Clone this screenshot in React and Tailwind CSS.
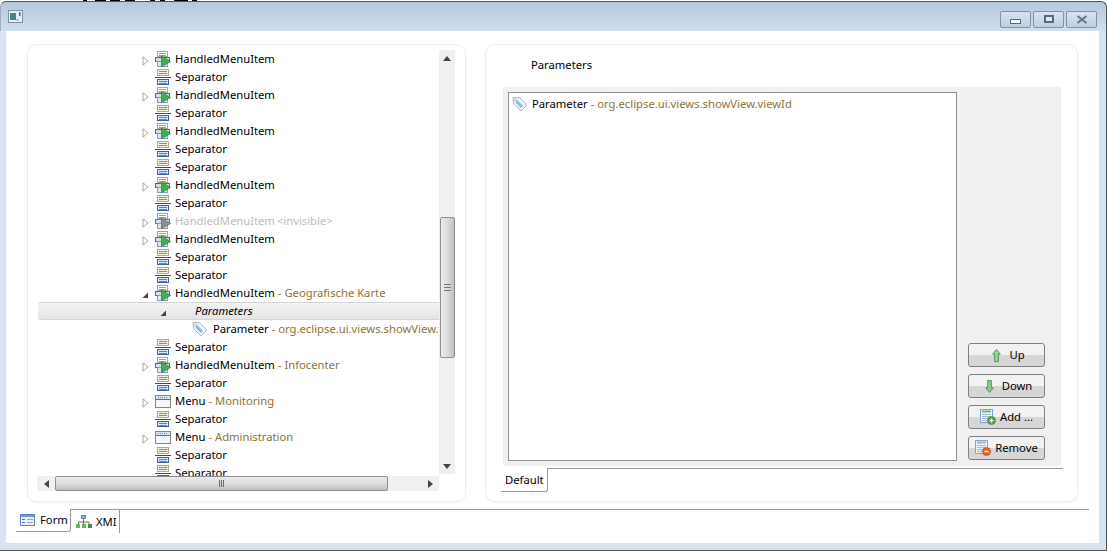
const rows = [
  { kind: "item", arrow: "closed" },
  { kind: "sep" },
  { kind: "item", arrow: "closed" },
  { kind: "sep" },
  { kind: "item", arrow: "closed" },
  { kind: "sep" },
  { kind: "sep" },
  { kind: "item", arrow: "closed" },
  { kind: "sep" },
  { kind: "item", arrow: "closed", invisible: true },
  { kind: "item", arrow: "closed" },
  { kind: "sep" },
  { kind: "sep" },
  { kind: "item", arrow: "open", label: "Geografische Karte" },
  { kind: "params" },
  { kind: "param" },
  { kind: "sep" },
  { kind: "item", arrow: "closed", label: "Infocenter" },
  { kind: "sep" },
  { kind: "menu", arrow: "closed", label: "Monitoring" },
  { kind: "sep" },
  { kind: "menu", arrow: "closed", label: "Administration" },
  { kind: "sep" },
  { kind: "sep" },
];

// bottoms of the letters that stick out above the window
const topMarks = [
  [83, 4], [95, 11], [110, 10], [125, 10], [150, 5], [160, 5], [174, 14], [192, 5],
];

function Twisty({ open }) {
  if (open) {
    return (
      <svg width="8" height="8" viewBox="0 0 8 8" className="block mt-[3px]">
        <path d="M7 1.5V7H1.5Z" fill="#444" />
      </svg>
    );
  }
  return (
    <svg width="7" height="10" viewBox="0 0 7 10" className="block ml-px mt-[4px]">
      <path d="M1 .8 6 5 1 9.2Z" fill="#fff" stroke="#a6a6a6" />
    </svg>
  );
}

function ItemIcon({ gray }) {
  const a = gray ? "#a5a5a5" : "#b5a878";
  const b = gray ? "#777" : "#2f6fbe";
  const c = gray ? "#9a9a9a" : "#7f9fd0";
  const g = gray ? "#8c8c8c" : "#3fb04f";
  return (
    <svg width="16" height="16" viewBox="0 0 16 16" className="block shrink-0">
      <rect x="2.5" y=".5" width="10" height="5" fill="#fff" stroke={a} />
      <path d="M4 2.5h7M4 4.5h7" stroke={c} />
      <rect x=".5" y="6.5" width="14" height="4" fill="#cfe0f5" stroke={b} />
      <rect x="2.5" y="10.5" width="10" height="5" fill="#dce6f5" stroke={c} />
      <path d="M6.5 5 15.5 10.5 6.5 15.8Z" fill={g} stroke={gray ? "#6a6a6a" : "#2a8a3a"} strokeWidth=".8" />
    </svg>
  );
}

function SepIcon() {
  return (
    <svg width="16" height="16" viewBox="0 0 16 16" className="block shrink-0">
      <rect x="2.5" y=".5" width="11" height="6" fill="#f5f3e8" stroke="#b5a878" />
      <path d="M4 2.5h8M4 4.5h8" stroke="#6f8fc4" />
      <path d="M0 8.5h16" stroke="#1f4f96" />
      <rect x="2.5" y="10.5" width="11" height="5" fill="#dbe6f6" stroke="#3a62a8" />
      <path d="M4 12.5h8M4 14.5h8" stroke="#5c80bd" />
    </svg>
  );
}

function MenuIcon() {
  return (
    <svg width="16" height="16" viewBox="0 0 16 16" className="block shrink-0">
      <rect x=".5" y="2.5" width="15" height="12" fill="#f4f8fc" stroke="#8a8a6a" />
      <rect x="1" y="3" width="14" height="3" fill="#d5e3f4" />
      <path d="M3 4.5h10" stroke="#6c8fc4" strokeDasharray="1 1" />
      <path d="M1 6.5h14" stroke="#3f74bf" />
    </svg>
  );
}

function TagIcon() {
  return (
    <svg width="16" height="16" viewBox="0 0 16 16" className="block shrink-0">
      <path d="M1 1.5H7.5L15 9 9 15 1.5 7.5Z" fill="#eef1f4" stroke="#b3b8bd" />
      <path d="M5 4 11 10 9 12 3.5 6.5Z" fill="#7cc0ef" />
      <circle cx="3.5" cy="3.8" r="1" fill="#fff" stroke="#9aa3aa" strokeWidth=".6" />
    </svg>
  );
}

function ArrowUpIcon() {
  return (
    <svg width="9" height="15" viewBox="0 0 10 15" className="block shrink-0">
      <path d="M5 .8 9.2 6H7V14.2H3V6H.8Z" fill="#9ed59e" stroke="#3e8a4a" />
    </svg>
  );
}

function ArrowDownIcon() {
  return (
    <svg width="9" height="15" viewBox="0 0 10 15" className="block shrink-0">
      <path d="M3 .8H7V9H9.2L5 14.2 .8 9H3Z" fill="#8fcb8f" stroke="#4a8a52" />
    </svg>
  );
}

function TableIcon({ add }) {
  return (
    <svg width="16" height="16" viewBox="0 0 16 16" className="block shrink-0">
      <rect x=".5" y=".5" width="12" height="13" fill="#f4f8fd" stroke="#7ea4d6" />
      <path d="M2 2.5h9" stroke={add ? "#74b56c" : "#a3aeb8"} strokeWidth="2" />
      <path d="M2 5.5h9M2 7.5h9M2 9.5h9M2 11.5h9" stroke="#9fb4cc" />
      <path d="M5.5 4v9" stroke="#c2d0e0" />
      <circle cx="11.5" cy="11.5" r="4" fill={add ? "#5fa646" : "#e0642a"} stroke={add ? "#3f7f30" : "#b94a1a"} strokeWidth=".7" />
      {add ? <path d="M9.5 11.5h4M11.5 9.5v4" stroke="#fff" strokeWidth="1.2" /> : <path d="M9.5 11.5h4" stroke="#fff" strokeWidth="1.4" />}
    </svg>
  );
}

function FormIcon() {
  return (
    <svg width="15" height="12" viewBox="0 0 15 12" className="block shrink-0">
      <rect x=".5" y=".5" width="14" height="11" fill="#e9f0fa" stroke="#5f86c4" />
      <rect x="1" y="1" width="13" height="2" fill="#6d97d6" />
      <path d="M2 5.5h3M2 8.5h3" stroke="#3f74bf" />
      <path d="M7 5.5h6M7 8.5h6" stroke="#a3a3a3" />
    </svg>
  );
}

function XmiIcon() {
  return (
    <svg width="16" height="14" viewBox="0 0 16 14" className="block shrink-0">
      <rect x="5.5" y=".5" width="4" height="3" fill="#8db6e6" stroke="#5f86c4" />
      <path d="M7.5 4v3M2.5 9V7h10.5v2M7.5 7v2" stroke="#6b6b6b" fill="none" />
      <rect x="0" y="9" width="4" height="4" fill="#6fb05e" />
      <rect x="6" y="9" width="4" height="4" fill="#6fb05e" />
      <rect x="12" y="9" width="4" height="4" fill="#3f8f3f" />
    </svg>
  );
}

function TreeRow({ row }) {
  if (row.kind === "params") {
    return (
      <div className="h-[18px] flex items-center relative">
        <div className="absolute left-0 right-0 top-0 bottom-0 bg-gradient-to-b from-[#f4f4f4] to-[#e4e4e4] border-y border-[#d4d4d4] rounded-l-[3px]" />
        <span className="relative ml-[121px] w-[36px]"><Twisty open /></span>
        <span className="relative italic text-black">Parameters</span>
      </div>
    );
  }
  if (row.kind === "param") {
    return (
      <div className="h-[18px] flex items-center whitespace-nowrap overflow-hidden">
        <span className="ml-[154px] mr-[5px]"><TagIcon /></span>
        <span className="text-black">Parameter</span>
        <span className="text-[#8b7435]">&nbsp;- org.eclipse.ui.views.showView.viewId</span>
      </div>
    );
  }
  return (
    <div className="h-[18px] flex items-center whitespace-nowrap">
      <span className="ml-[103px] w-[14px] flex items-center">
        {row.arrow === "closed" && <Twisty />}
        {row.arrow === "open" && <Twisty open />}
      </span>
      {row.kind === "item" && <ItemIcon gray={row.invisible} />}
      {row.kind === "sep" && <SepIcon />}
      {row.kind === "menu" && <MenuIcon />}
      <span className={row.invisible ? "ml-[4px] text-[#bdbdbd]" : "ml-[4px] text-black"}>
        {row.kind === "item" ? "HandledMenuItem" : row.kind === "menu" ? "Menu" : "Separator"}
        {row.invisible && <span className="ml-[2px]">{"<invisible>"}</span>}
      </span>
      {row.label && <span className="text-[#8b7435]">&nbsp;- {row.label}</span>}
    </div>
  );
}

function VScroll() {
  return (
    <div className="w-[16px] h-[424px] bg-[#f0f0f0] flex flex-col items-center shrink-0">
      <div className="h-[16px] flex items-center justify-center">
        <svg width="8" height="5" viewBox="0 0 8 5"><path d="M4 0 8 5H0Z" fill="#444" /></svg>
      </div>
      <div className="mt-[151px] w-[15px] h-[141px] rounded-[2px] border border-[#8f8f8f] bg-gradient-to-r from-[#ececec] via-[#dcdcdc] to-[#bfbfbf] flex items-center justify-center">
        <div className="w-[7px] h-[7px] border-y border-[#777] flex items-center"><div className="h-px w-full bg-[#777]" /></div>
      </div>
      <div className="mt-auto h-[16px] flex items-center justify-center">
        <svg width="8" height="5" viewBox="0 0 8 5"><path d="M0 0H8L4 5Z" fill="#444" /></svg>
      </div>
    </div>
  );
}

function HScroll() {
  return (
    <div className="h-[15px] w-[402px] ml-[9px] bg-[#f0f0f0] flex items-center">
      <div className="w-[18px] flex justify-center shrink-0">
        <svg width="5" height="8" viewBox="0 0 5 8"><path d="M5 0V8L0 4Z" fill="#444" /></svg>
      </div>
      <div className="w-[333px] h-[15px] rounded-[2px] border border-[#8f8f8f] bg-gradient-to-b from-[#ececec] via-[#dcdcdc] to-[#bfbfbf] flex items-center justify-center gap-px">
        <div className="w-px h-[7px] bg-[#666]" />
        <div className="w-px h-[7px] bg-[#666]" />
        <div className="w-px h-[7px] bg-[#666]" />
      </div>
      <div className="flex-1" />
      <div className="w-[18px] flex justify-center shrink-0">
        <svg width="5" height="8" viewBox="0 0 5 8"><path d="M0 0V8L5 4Z" fill="#444" /></svg>
      </div>
    </div>
  );
}

function SideButton({ icon, label, gap, nudge }) {
  return (
    <button className={(nudge ? "pl-[4px] " : "") + "w-[77px] h-[24px] rounded-[3px] border border-[#7f7f7f] bg-gradient-to-b from-[#f2f2f2] from-50% to-[#d6d6d6] to-50% flex items-center justify-center text-black"} style={{ gap }}>
      {icon}
      <span>{label}</span>
    </button>
  );
}

function WinButton({ children }) {
  return (
    <div className="w-[31px] h-[17px] rounded-[2px] border border-[#7f92aa] bg-gradient-to-b from-[#d8e4f0] to-[#bccfe2] flex items-center justify-center">
      {children}
    </div>
  );
}

export default function App() {
  return (
    <div className="w-[1107px] h-[551px] overflow-hidden bg-white text-[11.25px] leading-[18px] flex flex-col" style={{ fontFamily: '"Noto Sans", "Open Sans", sans-serif' }}>
      <div className="h-px shrink-0 relative">
        {topMarks.map(([x, w]) => (
          <div key={x} className="absolute top-0 h-px bg-black" style={{ left: x, width: w }} />
        ))}
      </div>
      {/* title bar */}
      <div className="h-[30px] shrink-0 rounded-t-[6px] border-t border-r border-l border-t-[#4b5560] border-r-[#4b5560] border-l-[#9fb0c2] bg-gradient-to-b from-[#b4c8dc] to-[#d0dfee] flex items-center justify-between pl-[7px] pr-[9px]">
        <svg width="15" height="13" viewBox="0 0 15 13" className="block mb-[1px]">
          <rect x=".5" y=".5" width="14" height="12" fill="#e8eef4" stroke="#7d8fa3" />
          <rect x="2" y="3" width="6" height="7" fill="#3f8a7e" />
          <rect x="11" y="2" width="1.5" height="4" fill="#2f6fbe" />
          <rect x="8" y="9" width="3" height="2" fill="#b8c4cf" />
        </svg>
        <div className="flex gap-[2px] mt-[5px]">
          <WinButton><div className="w-[11px] h-[5px] mt-[4px] border border-[#5b6775] bg-white" /></WinButton>
          <WinButton><div className="w-[10px] h-[8px] border-2 border-[#5b6775] bg-[#dfe8f2]" /></WinButton>
          <WinButton>
            <svg width="12" height="9" viewBox="0 0 12 9"><path d="M1.5 1 10.5 8M10.5 1 1.5 8" stroke="#6b7785" strokeWidth="2.2" /></svg>
          </WinButton>
        </div>
      </div>

      {/* client area */}
      <div className="flex-1 min-h-0 bg-[#d6e4f2] border-r border-b border-[#4b5560] flex flex-col">
        <div className="flex-1 min-h-0 ml-[6px] mr-[7px] bg-white flex flex-col">
          <div className="flex pt-[13px] pl-[21px] gap-[19px]">
            {/* tree card */}
            <div className="w-[439px] h-[458px] shrink-0 rounded-[10px] border border-[#eeeeee] pt-[5px] flex flex-col shadow-[0_1px_2px_#f0f0f0]">
              <div className="h-[426px] ml-[10px] mr-[10px] flex overflow-hidden">
                <div className="flex-1 overflow-hidden min-w-0">
                  {rows.map((row, i) => <TreeRow key={i} row={row} />)}
                </div>
                <VScroll />
              </div>
              <HScroll />
            </div>

            {/* details card */}
            <div className="w-[593px] h-[458px] shrink-0 rounded-[10px] border border-[#eeeeee] flex flex-col shadow-[0_1px_2px_#f0f0f0]">
              <div className="h-[42px] pl-[45px] pb-[2px] flex items-center text-black">Parameters</div>
              <div className="ml-[17px] w-[558px] h-[379px] bg-[#f0f0f0] flex pl-[5px] pt-[5px] pb-[5px] shrink-0">
                <div className="w-[449px] bg-white border border-[#8c8f96] pl-[3px] pt-[2px]">
                  <div className="flex items-center h-[18px] whitespace-nowrap">
                    <TagIcon />
                    <span className="ml-[4px] text-black">Parameter</span>
                    <span className="text-[#8b7435]">&nbsp;- org.eclipse.ui.views.showView.viewId</span>
                  </div>
                </div>
                <div className="flex-1 flex flex-col items-center justify-end gap-[7px] pb-px pr-[5px]">
                  <SideButton icon={<ArrowUpIcon />} label="Up" gap="8px" nudge />
                  <SideButton icon={<ArrowDownIcon />} label="Down" gap="8px" nudge />
                  <SideButton icon={<TableIcon add />} label="Add ..." gap="4px" />
                  <SideButton icon={<TableIcon />} label="Remove" gap="4px" />
                </div>
              </div>
              <div className="ml-[15px] mr-[14px] flex h-[24px] mt-[2px]">
                <div className="h-[24px] w-[47px] border-b border-r border-[#9a9a9a] rounded-br-[3px] pl-[4px] flex items-center text-black">Default</div>
                <div className="flex-1 border-t border-[#9a9a9a]" />
              </div>
            </div>
          </div>

          {/* editor tabs */}
          <div className="flex mt-[7px] ml-[10px] mr-[10px] h-[24px]">
            <div className="w-[55px] h-[23px] border-b border-r border-[#9a9a9a] rounded-br-[3px] flex items-center gap-[5px] pl-[4px] text-black">
              <FormIcon />
              <span>Form</span>
            </div>
            <div className="w-[49px] border-t border-r border-[#9a9a9a] flex items-center gap-[4px] pl-[5px] text-black">
              <XmiIcon />
              <span>XMI</span>
            </div>
            <div className="flex-1 border-t border-[#9a9a9a]" />
          </div>
        </div>
        <div className="h-[7px] shrink-0" />
      </div>
    </div>
  );
}
